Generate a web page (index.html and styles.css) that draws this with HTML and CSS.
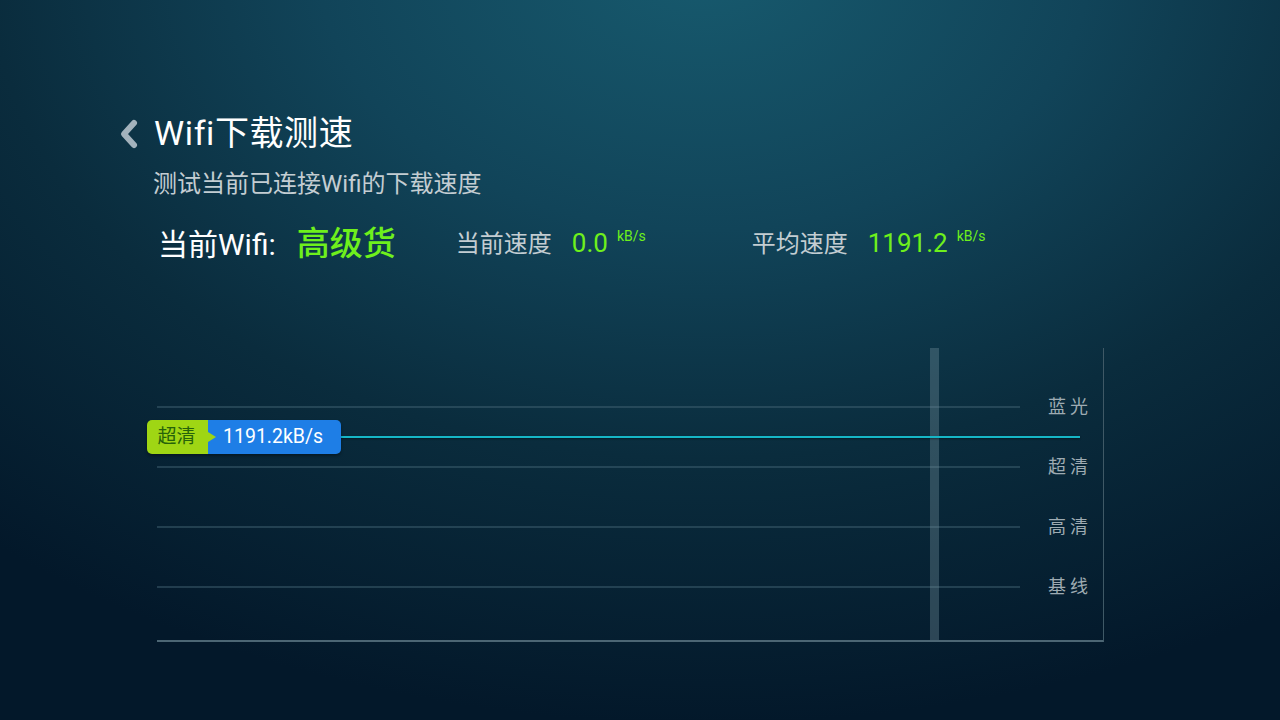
FILE: index.html
```html
<!DOCTYPE html>
<html lang="zh-CN">
<head>
<meta charset="utf-8">
<title>Wifi下载测速</title>
<link rel="stylesheet" href="styles.css">
</head>
<body>
<div class="screen">
  <header class="header">
    <div class="title-row">
      <svg class="back" width="22" height="32" viewBox="0 0 22 32"><path d="M16 5 L6 16 L16 27" fill="none" stroke="#a3b2bc" stroke-width="6" stroke-linecap="round" stroke-linejoin="round"/></svg>
      <h1 class="title">Wifi下载测速</h1>
    </div>
    <p class="subtitle">测试当前已连接Wifi的下载速度</p>
    <div class="stats">
      <div class="stat stat-wifi">
        <span class="wifi-label">当前Wifi:</span>
        <span class="wifi-name">高级货</span>
      </div>
      <div class="stat stat-cur">
        <span class="stat-label">当前速度</span>
        <span class="stat-value">0.0</span>
        <span class="unit">kB/s</span>
      </div>
      <div class="stat stat-avg">
        <span class="stat-label">平均速度</span>
        <span class="stat-value">1191.2</span>
        <span class="unit">kB/s</span>
      </div>
    </div>
  </header>

  <section class="chart">
    <div class="row"><div class="grid-line"></div><span class="level">蓝光</span></div>
    <div class="row"><div class="grid-line"></div><span class="level">超清</span></div>
    <div class="row"><div class="grid-line"></div><span class="level">高清</span></div>
    <div class="row"><div class="grid-line"></div><span class="level">基线</span></div>
    <div class="scan-bar"></div>
    <div class="speed-line"></div>
    <div class="badge">
      <span class="badge-level">超清</span>
      <span class="badge-speed">1191.2kB/s</span>
    </div>
  </section>
</div>
</body>
</html>
```

FILE: styles.css
```css
html, body {
  margin: 0;
  padding: 0;
}
body {
  width: 1280px;
  height: 720px;
  overflow: hidden;
  font-family: Roboto, "Noto Sans CJK SC", sans-serif;
}
.screen {
  width: 1280px;
  height: 720px;
  box-sizing: border-box;
  padding-top: 110px;
  background: radial-gradient(ellipse 1100px 760px at 55% -5%, #175a6e 0%, #114459 35%, #0a2c3d 65%, #03182a 100%);
}
.header {
  padding-left: 118px;
}
.title-row {
  display: flex;
  align-items: center;
  height: 46px;
}
.back {
  display: block;
  margin-right: 14px;
  margin-top: 2px;
}
.title {
  margin: 0;
  font-size: 34px;
  font-weight: 400;
  color: #ffffff;
  line-height: 46px;
  letter-spacing: 0.6px;
}
.subtitle {
  margin: 12px 0 0 35px;
  font-size: 24px;
  line-height: 32px;
  color: #c3cdd2;
}
.stats {
  display: flex;
  align-items: flex-start;
  margin: 20px 0 0 40px;
  height: 48px;
}
.stat {
  display: flex;
  align-items: baseline;
}
.wifi-label {
  font-size: 30px;
  color: #ffffff;
  line-height: 48px;
}
.wifi-name {
  font-size: 33px;
  color: #6ef01c;
  font-weight: 500;
  margin-left: 21px;
  line-height: 48px;
}
.stat-cur {
  margin-left: 60px;
}
.stat-avg {
  margin-left: 106px;
}
.stat-label {
  font-size: 24px;
  color: #c3cdd2;
  line-height: 48px;
}
.stat-value {
  font-size: 26px;
  color: #6ef01c;
  margin-left: 20px;
}
.unit {
  font-size: 14px;
  color: #6ef01c;
  margin-left: 9px;
  position: relative;
  top: -11px;
}
.chart {
  position: relative;
  margin: 80px 0 0 157px;
  width: 946px;
  height: 292px;
  border-right: 1px solid #3f5966;
  border-bottom: 2px solid #4c6674;
  display: flex;
  flex-direction: column;
}
.row {
  display: flex;
  align-items: center;
  height: 60px;
}
.row:first-child {
  margin-top: 29px;
}
.grid-line {
  flex: 1;
  height: 2px;
  background: rgba(70, 105, 120, 0.45);
}
.level {
  width: 44px;
  margin-left: 28px;
  margin-right: 11px;
  font-size: 18px;
  letter-spacing: 4px;
  color: #9eabb2;
  white-space: nowrap;
  line-height: 24px;
}
.scan-bar {
  position: absolute;
  left: 773px;
  top: 0;
  width: 9px;
  height: 292px;
  background: rgba(120, 150, 160, 0.35);
}
.speed-line {
  position: absolute;
  left: 183px;
  top: 88px;
  width: 740px;
  height: 2px;
  background: #16b6c6;
  box-shadow: 0 1px 2px rgba(0,0,0,0.4);
}
.badge {
  position: absolute;
  left: -10px;
  top: 72px;
  height: 34px;
  display: flex;
  border-radius: 5px;
  box-shadow: 0 2px 3px rgba(0,0,0,0.35);
}
.badge-level {
  position: relative;
  width: 61px;
  background: #9fd614;
  color: #26620a;
  font-size: 19px;
  line-height: 34px;
  text-align: center;
  border-radius: 5px 0 0 5px;
  padding-right: 2px;
  box-sizing: border-box;
}
.badge-level::after {
  content: "";
  position: absolute;
  right: -8px;
  top: 12px;
  border-top: 5px solid transparent;
  border-bottom: 5px solid transparent;
  border-left: 8px solid #9fd614;
}
.badge-speed {
  width: 133px;
  background: #1e7ee6;
  color: #ffffff;
  font-size: 19.5px;
  line-height: 34px;
  padding-left: 15px;
  box-sizing: border-box;
  border-radius: 0 5px 5px 0;
}
```
